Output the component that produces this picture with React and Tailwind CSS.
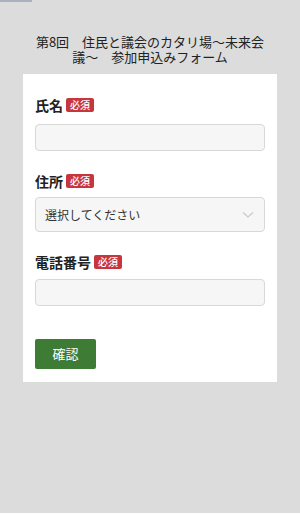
import React from "react";

const font = { fontFamily: '"Noto Sans CJK JP", "Noto Sans", sans-serif' };

function Badge() {
  return (
    <span className="ml-[3px] inline-flex h-[14px] items-center rounded-[2px] bg-[#c8363d] px-[4px] text-[10px] font-medium leading-none text-white">
      必須
    </span>
  );
}

function Label({ children }) {
  return (
    <div className="flex h-[15px] items-center text-[14px] font-bold leading-none text-[#222]">
      <span>{children}</span>
      <Badge />
    </div>
  );
}

export default function App() {
  return (
    <div style={font} className="relative min-h-[515px] w-[300px] bg-[#dcdcdc]">
      <div className="absolute left-0 top-0 h-[2px] w-[32px] bg-[#aab0bd]" />
      <div className="px-[23px] pt-[34px]">
        <h1 className="text-center text-[13px] leading-[15px] text-[#222]">
          第8回　住民と議会のカタリ場〜未来会議〜　参加申込みフォーム
        </h1>
      </div>
      <div className="mx-[23px] mt-[10px] bg-white px-[12px] pb-[13px] pt-[23px]">
        <Label>氏名</Label>
        <div className="mt-[12px] h-[27px] rounded-[4px] border border-[#d8d8d8] bg-[#f6f6f6]" />
        <div className="mt-[22px]">
          <Label>住所</Label>
        </div>
        <div className="mt-[9px] flex h-[35px] items-center justify-between rounded-[4px] border border-[#d8d8d8] bg-[#f6f6f6] pl-[9px] pr-[10px]">
          <span className="text-[12px] text-[#333]">選択してください</span>
          <svg width="12" height="8" viewBox="0 0 12 8" fill="none">
            <path d="M1 1.5 L6 6 L11 1.5" stroke="#c8c8c8" strokeWidth="1.2" />
          </svg>
        </div>
        <div className="mt-[22px]">
          <Label>電話番号</Label>
        </div>
        <div className="mt-[10px] h-[27px] rounded-[4px] border border-[#d8d8d8] bg-[#f6f6f6]" />
        <button className="mt-[33px] flex h-[30px] w-[61px] items-center justify-center rounded-[2px] bg-[#3e7b35] text-[13px] text-white">
          確認
        </button>
      </div>
      <div className="absolute bottom-0 left-0 h-[2px] w-full bg-white" />
    </div>
  );
}
